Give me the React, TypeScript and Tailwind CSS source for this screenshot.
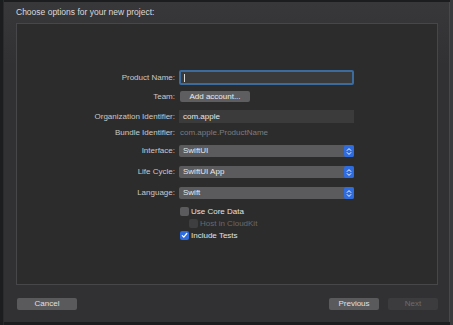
import React from "react";

const font = { fontFamily: '"Liberation Sans", Arial, sans-serif' };

function Label({ children }: { children: React.ReactNode }) {
  return <div className="w-[158px] shrink-0 text-right text-[8px] text-[#c9c9c9] pr-0">{children}</div>;
}

function Stepper() {
  return (
    <div className="ml-auto h-full w-[10px] rounded-[2px] bg-[#2e6ce0] flex items-center justify-center">
      <svg width="6" height="9" viewBox="0 0 6 9" fill="none" stroke="#fff" strokeWidth="1" strokeLinecap="round" strokeLinejoin="round">
        <path d="M1.2 3.4 L3 1.6 L4.8 3.4" />
        <path d="M1.2 5.6 L3 7.4 L4.8 5.6" />
      </svg>
    </div>
  );
}

function Popup({ value, mt }: { value: string; mt: string }) {
  return (
    <div className={`flex items-center h-[12px] ${mt}`}>
      <Label>{value === "SwiftUI" ? "Interface:" : value === "SwiftUI App" ? "Life Cycle:" : "Language:"}</Label>
      <div className="ml-[4px] w-[175px] h-full rounded-[2px] bg-[#5b5b5d] flex items-center pl-[4px] text-[8px] text-[#e8e8e8]">
        {value}
        <Stepper />
      </div>
    </div>
  );
}

function Check({ label, checked, dim, mt, indent }: { label: string; checked?: boolean; dim?: boolean; mt: string; indent?: boolean }) {
  return (
    <div className={`flex items-center h-[9px] ${mt}`}>
      <div className={`w-[158px] shrink-0 ${indent ? "mr-[14px]" : "mr-[5px]"}`} />
      <div
        className={`w-[9px] h-[9px] rounded-[2px] flex items-center justify-center ${
          checked ? "bg-[#2e6ce0]" : dim ? "bg-[#3e3e40]" : "bg-[#5b5b5d]"
        }`}
      >
        {checked && (
          <svg width="7" height="7" viewBox="0 0 7 7" fill="none" stroke="#fff" strokeWidth="1.2" strokeLinecap="round" strokeLinejoin="round">
            <path d="M1.3 3.7 L2.8 5.2 L5.8 1.5" />
          </svg>
        )}
      </div>
      <span className={`ml-[2px] text-[8px] ${dim ? "text-[#6a6a6a]" : "text-[#e2e2e2]"}`}>{label}</span>
    </div>
  );
}

export default function App() {
  return (
    <div className="w-[453px] h-[325px] bg-[#1c1d1f] flex overflow-hidden" style={font}>
      {/* left sidebar sliver */}
      <div className="w-[4px] shrink-0 border-r border-[#2a2b2d]" />

      <div className="w-[446px] mt-[2px] h-[320px] bg-gradient-to-b from-[#38383a] to-[#313133] to-[20%] flex flex-col border-r border-[#48484a]">
        <div className="h-[21px] pl-[12px] flex items-center text-[8.5px] text-[#dadada]">
          Choose options for your new project:
        </div>

        {/* options box */}
        <div className="ml-[12px] w-[422px] h-[262px] bg-[#2c2c2d] border border-[#474749] flex flex-col">
          <div className="flex items-center h-[15px] mt-[46px]">
            <Label>Product Name:</Label>
            <div className="ml-[4px] w-[175px] h-full rounded-[2px] border-2 border-[#3c6b9e] bg-[#3a3a3b] flex items-center pl-[3px]">
              <div className="w-px h-[8px] bg-[#d8d8d8]" />
            </div>
          </div>

          <div className="flex items-center h-[11px] mt-[6px]">
            <Label>Team:</Label>
            <div className="ml-[5px] w-[70px] h-full rounded-[2px] bg-[#5e5e60] flex items-center justify-center text-[8px] text-[#ececec]">
              Add account...
            </div>
          </div>

          <div className="flex items-center h-[13px] mt-[8px]">
            <Label>Organization Identifier:</Label>
            <div className="ml-[4px] w-[175px] h-full bg-[#3b3b3c] flex items-center pl-[4px] text-[8px] text-[#e6e6e6]">
              com.apple
            </div>
          </div>

          <div className="flex items-center h-[11px] mt-[4px]">
            <Label>Bundle Identifier:</Label>
            <div className="ml-[5px] text-[8px] text-[#7c7c7e]">com.apple.ProductName</div>
          </div>

          <Popup value="SwiftUI" mt="mt-[7px]" />
          <Popup value="SwiftUI App" mt="mt-[9px]" />
          <Popup value="Swift" mt="mt-[9px]" />

          <Check label="Use Core Data" mt="mt-[8px]" />
          <Check label="Host in CloudKit" dim indent mt="mt-[3px]" />
          <Check label="Include Tests" checked mt="mt-[3px]" />
        </div>

        <div className="flex items-center h-[12px] mt-[13px] pl-[13px]">
          <div className="w-[60px] h-full rounded-[2px] bg-[#5a5a5c] flex items-center justify-center text-[8px] text-[#e0e0e0]">
            Cancel
          </div>
          <div className="ml-auto w-[50px] h-full rounded-[2px] bg-[#5a5a5c] flex items-center justify-center text-[8px] text-[#e0e0e0]">
            Previous
          </div>
          <div className="ml-[9px] mr-[11px] w-[50px] h-full rounded-[2px] bg-[#3c3c3e] flex items-center justify-center text-[8px] text-[#6c6c6e]">
            Next
          </div>
        </div>
      </div>

      <div className="flex-1 bg-[#3a3a3c]" />
    </div>
  );
}
